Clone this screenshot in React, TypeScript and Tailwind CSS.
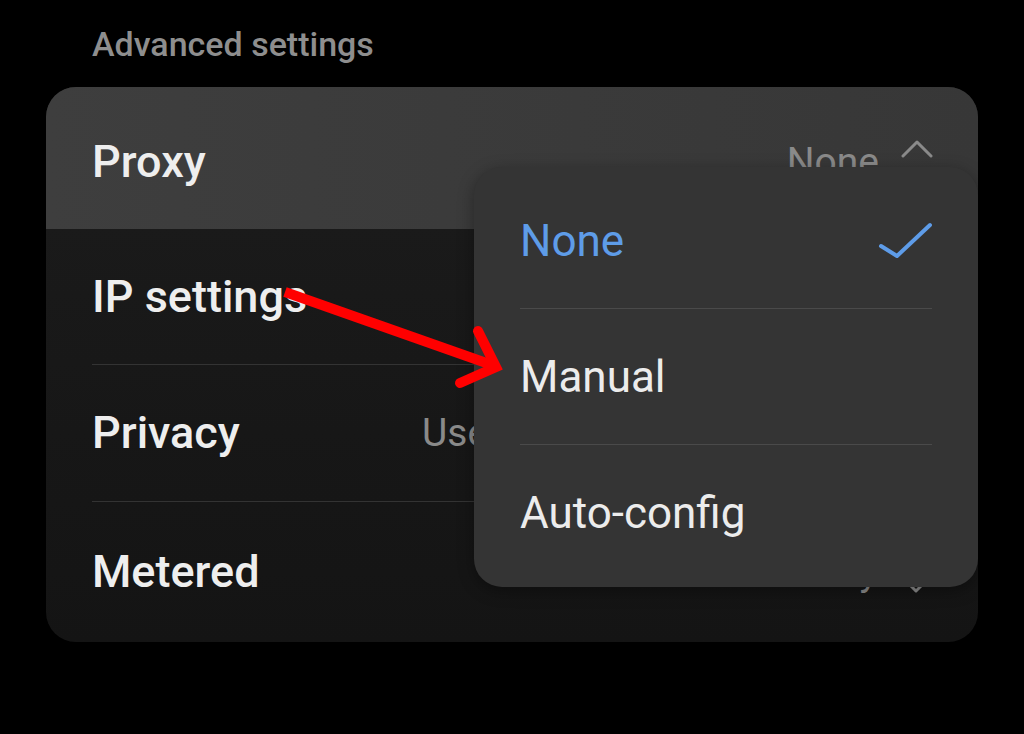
import React from "react";

const font = { fontFamily: "Roboto, 'Noto Sans', sans-serif" };

function Chevron({ up = false }: { up?: boolean }) {
  return (
    <svg
      width="32"
      height="18"
      viewBox="0 0 32 18"
      className={up ? "mb-[26px] shrink-0" : "mt-[24px] shrink-0"}
    >
      <path
        d={up ? "M2 16 L16 2 L30 16" : "M2 2 L16 16 L30 2"}
        fill="none"
        stroke="#8a8a8a"
        strokeWidth="3"
        strokeLinecap="round"
        strokeLinejoin="round"
      />
    </svg>
  );
}

const rows = [
  { label: "IP settings", value: "DHCP", h: "h-[136px]" },
  { label: "Privacy", value: "Use randomized MAC", h: "h-[137px]", wide: true },
  { label: "Metered", value: "Detect automatically", h: "h-[140px]" },
];

const options = ["None", "Manual", "Auto-config"];

export default function App() {
  return (
    <div
      className="relative h-[734px] w-[1024px] overflow-hidden bg-black"
      style={font}
    >
      <div className="pl-[92px] pt-[24px] text-[34px] font-medium leading-[40px] text-[#8e8e8e]">
        Advanced settings
      </div>

      {/* Card */}
      <div className="relative ml-[46px] mt-[23px] w-[932px]">
        <div className="overflow-hidden rounded-[30px] bg-gradient-to-b from-[#1c1c1c] to-[#141414]">
          <div className="flex h-[142px] items-center justify-between bg-gradient-to-r from-[#3e3e3e] to-[#373737] pl-[46px] pr-[45px] pt-[8px]">
            <span className="text-[45px] font-medium text-[#eeeeee]">Proxy</span>
            <span className="flex items-center gap-[22px] text-[39px] text-[#8a8a8a]">
              <span className="ml-[3px]">None</span>
              <Chevron up />
            </span>
          </div>
          {rows.map((r, i) => (
            <div key={r.label} className="px-[46px]">
              <div
                className={`flex items-center justify-between ${r.h} ${
                  i < rows.length - 1 ? "border-b border-[#333333]" : ""
                }`}
              >
                <span className="text-[45px] font-medium text-[#eeeeee]">
                  {r.label}
                </span>
                <span className="flex items-center gap-[22px] text-[39px] text-[#8a8a8a]">
                  <span className={r.wide ? "min-w-[456px]" : ""}>{r.value}</span>
                  <Chevron />
                </span>
              </div>
            </div>
          ))}
        </div>

        {/* Dropdown menu */}
        <div className="absolute right-0 top-[80px] w-[504px] rounded-[28px] bg-[#343434] px-[46px] py-[6px] shadow-[0_4px_16px_rgba(0,0,0,0.35)]">
          {options.map((o, i) => (
            <div
              key={o}
              className={`flex h-[136px] items-center justify-between ${
                i < options.length - 1 ? "border-b border-[#4a4a4a]" : ""
              }`}
            >
              <span
                className={`text-[44px] ${
                  i === 0 ? "text-[#5e9ce8]" : "text-[#ececec]"
                }`}
              >
                {o}
              </span>
              {i === 0 && (
                <svg width="56" height="40" viewBox="0 0 56 40" className="mt-[2px]">
                  <path
                    d="M5 24 L21 34 L54 3"
                    fill="none"
                    stroke="#5e9ce8"
                    strokeWidth="4"
                    strokeLinecap="round"
                    strokeLinejoin="round"
                  />
                </svg>
              )}
            </div>
          ))}
        </div>
      </div>

      {/* Red annotation arrow */}
      <svg
        className="pointer-events-none absolute left-0 top-0"
        width="1024"
        height="734"
        viewBox="0 0 1024 734"
      >
        <path
          d="M285 292 L492 365"
          stroke="#ff0000"
          strokeWidth="10"
          strokeLinecap="butt"
          fill="none"
        />
        <path
          d="M478 331 L496 367 L460 383"
          stroke="#ff0000"
          strokeWidth="10"
          strokeLinecap="round"
          strokeLinejoin="miter"
          fill="none"
        />
      </svg>
    </div>
  );
}
